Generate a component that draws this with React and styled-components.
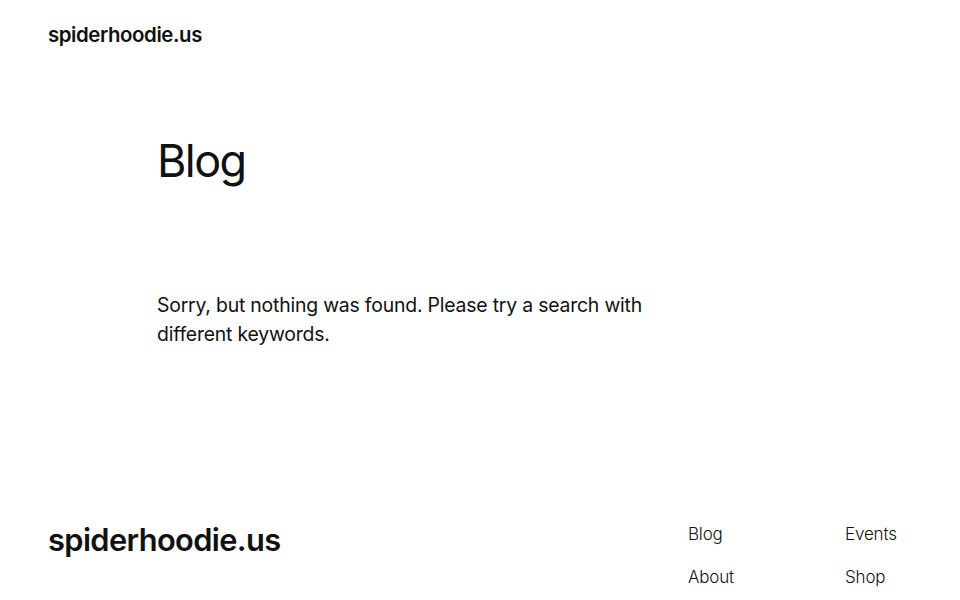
import styled, { createGlobalStyle } from 'styled-components';

const GlobalStyle = createGlobalStyle`
  body {
    margin: 0;
    background: #ffffff;
    color: #111111;
    font-family: Inter, "Noto Sans", sans-serif;
  }
`;

const Page = styled.div`
  display: flex;
  flex-direction: column;
  min-height: 600px;
`;

const Header = styled.header`
  display: flex;
  align-items: center;
  height: 68px;
  padding: 0 48px;
`;

const SiteTitle = styled.a`
  font-size: ${(p) => (p.large ? '30.8px' : '20.4px')};
  font-weight: 600;
  letter-spacing: -0.02em;
  color: #111111;
  text-decoration: none;
`;

const Main = styled.main`
  width: 540px;
  margin-left: 157px;
  padding-top: 66px;
  padding-bottom: 174px;
`;

const Heading = styled.h1`
  margin: 0 0 103px;
  font-size: 45px;
  font-weight: 400;
  line-height: 1.2;
  letter-spacing: -0.035em;
`;

const Notice = styled.p`
  margin: 0;
  font-size: 19.4px;
  font-weight: 400;
  line-height: 29px;
  letter-spacing: -0.01em;
  color: #111111;
`;

const Footer = styled.footer`
  display: flex;
  justify-content: space-between;
  align-items: flex-start;
  padding: 0 48px;
`;

const FooterBrand = styled.div`
  margin-top: -2px;
`;

const NavGrid = styled.nav`
  display: grid;
  grid-template-columns: 157px 67px;
  row-gap: 20px;
  padding-top: 0;
`;

const NavLink = styled.a`
  font-size: 17px;
  font-weight: 300;
  line-height: 23px;
  letter-spacing: -0.01em;
  color: #111111;
  text-decoration: none;
`;

export default function App() {
  return (
    <Page>
      <GlobalStyle />
      <Header>
        <SiteTitle href="#">spiderhoodie.us</SiteTitle>
      </Header>
      <Main>
        <Heading>Blog</Heading>
        <Notice>
          Sorry, but nothing was found. Please try a search with different keywords.
        </Notice>
      </Main>
      <Footer>
        <FooterBrand>
          <SiteTitle href="#" large>spiderhoodie.us</SiteTitle>
        </FooterBrand>
        <NavGrid>
          <NavLink href="#">Blog</NavLink>
          <NavLink href="#">Events</NavLink>
          <NavLink href="#">About</NavLink>
          <NavLink href="#">Shop</NavLink>
        </NavGrid>
      </Footer>
    </Page>
  );
}
